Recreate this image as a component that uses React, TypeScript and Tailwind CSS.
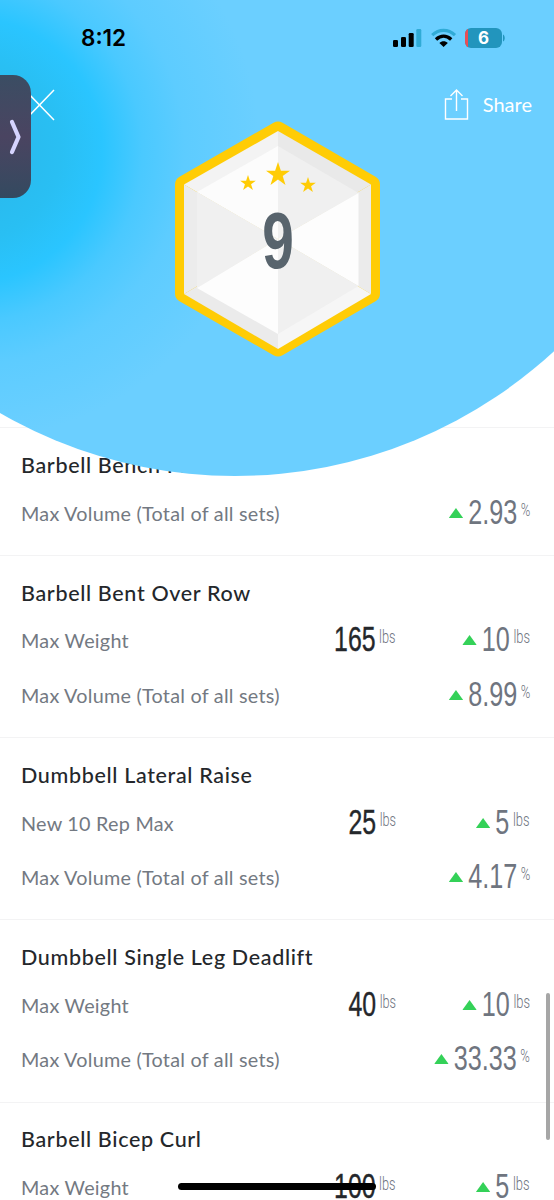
import React from 'react';

type Metric = { value: string; unit: string };

type Row = {
  label: string;
  total?: Metric;
  delta: Metric;
};

type Exercise = { name: string; rows: Row[] };

const exercises: Exercise[] = [
  {
    name: 'Barbell Bench Press',
    rows: [
      { label: 'Max Volume (Total of all sets)', delta: { value: '2.93', unit: '%' } },
    ],
  },
  {
    name: 'Barbell Bent Over Row',
    rows: [
      { label: 'Max Weight', total: { value: '165', unit: 'lbs' }, delta: { value: '10', unit: 'lbs' } },
      { label: 'Max Volume (Total of all sets)', delta: { value: '8.99', unit: '%' } },
    ],
  },
  {
    name: 'Dumbbell Lateral Raise',
    rows: [
      { label: 'New 10 Rep Max', total: { value: '25', unit: 'lbs' }, delta: { value: '5', unit: 'lbs' } },
      { label: 'Max Volume (Total of all sets)', delta: { value: '4.17', unit: '%' } },
    ],
  },
  {
    name: 'Dumbbell Single Leg Deadlift',
    rows: [
      { label: 'Max Weight', total: { value: '40', unit: 'lbs' }, delta: { value: '10', unit: 'lbs' } },
      { label: 'Max Volume (Total of all sets)', delta: { value: '33.33', unit: '%' } },
    ],
  },
  {
    name: 'Barbell Bicep Curl',
    rows: [
      { label: 'Max Weight', total: { value: '100', unit: 'lbs' }, delta: { value: '5', unit: 'lbs' } },
    ],
  },
];

function Unit({ children }: { children: string }) {
  return (
    <span className="ml-[5px] -mt-[4px] font-['Roboto'] text-[18px] leading-[20px] font-light text-[#6f757f]">
      {children}
    </span>
  );
}

// Digits are squeezed horizontally to get a condensed face
function Total({ value, unit }: Metric) {
  return (
    <div className="flex origin-right scale-x-[0.71] items-center pb-[4px]">
      <span className="font-['Liberation_Sans'] text-[35px] leading-[40px] text-[#24272b] [-webkit-text-stroke:0.4px_#24272b]">
        {value}
      </span>
      <Unit>{unit}</Unit>
    </div>
  );
}

function Delta({ value, unit }: Metric) {
  return (
    <div className="flex origin-right scale-x-[0.72] items-center pb-[4px]">
      <svg className="mt-[2px] mr-[7px] h-[10px] w-[20px]" viewBox="0 0 20 10" preserveAspectRatio="none">
        <path d="M10 0L20 10H0z" fill="#34d158" />
      </svg>
      <span className="font-['Liberation_Sans'] text-[35px] leading-[40px] text-[#6f757f]">{value}</span>
      <Unit>{unit}</Unit>
    </div>
  );
}

function Star({ className }: { className: string }) {
  return (
    <svg className={className} viewBox="0 0 24 23">
      <path d="M12 0l2.9 8.7H24l-7.3 5.4 2.8 8.9L12 17.6 4.5 23l2.8-8.9L0 8.700h9.100z" fill="#ffcc05" />
    </svg>
  );
}

function Badge() {
  return (
    <div className="relative h-[236px] w-[206px]">
      <svg className="absolute inset-0 h-full w-full" viewBox="0 0 206 236">
        <path
          d="M103 9.500L196 63.500V172.500L103 226.500L9 172.500V63.500Z"
          fill="#ffcc05"
          stroke="#ffcc05"
          strokeWidth="18"
          strokeLinejoin="round"
        />
        <path d="M103 10V118L9 63.500Z" fill="#f3f3f3" />
        <path d="M103 10L196 63.500L103 118Z" fill="#e9e9e9" />
        <path d="M9 63.500L103 118L9 173Z" fill="#ececec" />
        <path d="M196 63.500V173L103 118Z" fill="#ebebeb" />
        <path d="M9 173L103 118V228Z" fill="#ebebeb" />
        <path d="M196 173L103 228V118Z" fill="#f6f6f6" />
        <path d="M103 25V118L22 71Z" fill="#fcfcfc" />
        <path d="M103 25L183.500 72L103 118Z" fill="#f0f0f0" />
        <path d="M22 71L103 118L22 167Z" fill="#f0f0f0" />
        <path d="M183.500 72V165L103 118Z" fill="#fdfdfd" />
        <path d="M22 167L103 118V213Z" fill="#fdfdfd" />
        <path d="M183.500 165L103 213V118Z" fill="#f0f0f0" />
      </svg>
      <div className="relative flex flex-col items-center pt-[41px]">
        <div className="flex items-start gap-[10px]">
          <Star className="mt-[13px] h-[15px] w-[16px]" />
          <Star className="h-[23px] w-[24px]" />
          <Star className="mt-[15px] h-[15px] w-[16px]" />
        </div>
        <span className="mt-[9px] scale-x-[0.72] font-['Liberation_Sans'] text-[79px] leading-[80px] font-bold text-[#58646d]">9</span>
      </div>
    </div>
  );
}

function StatusIcons() {
  return (
    <svg className="h-[20px] w-[112px]" viewBox="0 0 112 20">
      <rect x="0" y="12" width="5" height="7" rx="1.300" fill="#000" />
      <rect x="8" y="9" width="5" height="10" rx="1.300" fill="#000" />
      <rect x="15.700" y="5" width="5" height="14" rx="1.300" fill="#000" />
      <rect x="23.300" y="1" width="5" height="18" rx="1.300" fill="#30abd6" />
      <path d="M39.200 7.200C46 .8 55.200 .8 62 7.200" fill="none" stroke="#30abd6" strokeWidth="3.200" />
      <path d="M43 11.400c4.700-4.300 10.600-4.300 15.200 0" fill="none" stroke="#000" strokeWidth="3.400" />
      <path d="M46.400 15c2.400-2.200 6-2.200 8.400 0L50.600 19z" fill="#000" />
      <clipPath id="battery">
        <rect x="72" y="0" width="37" height="20" rx="6" />
      </clipPath>
      <g clipPath="url(#battery)">
        <rect x="72" y="0" width="37" height="20" fill="#2295bd" />
        <rect x="72" y="0" width="3" height="20" fill="#ea4e56" />
      </g>
      <path d="M110 6.500c2.300 1 2.300 6 0 7z" fill="#2295bd" />
      <text x="90.500" y="16" textAnchor="middle" fontFamily="Inter" fontSize="17" fontWeight="700" fill="#fff">6</text>
    </svg>
  );
}

export default function App() {
  return (
    <div className="relative h-[1200px] w-[554px] overflow-hidden bg-white font-['Lato',sans-serif]">
      <main className="pt-[427px]">
        {exercises.map((exercise) => (
          <section key={exercise.name} className="border-t border-[#f3f3f4] pt-[15.750px] pb-[14px]">
            <h2 className="flex h-[42.500px] items-center pl-[21px] text-[21.500px] font-medium tracking-[0.660px] text-[#24272b]">
              {exercise.name}
            </h2>
            {exercise.rows.map(({ label, total, delta }) => (
              <div key={label} className="flex h-[54.500px] items-center pr-[24px] pl-[21px]">
                <span className="flex-1 whitespace-nowrap text-[19.800px] tracking-[0.250px] text-[#737982]">{label}</span>
                {total && <Total {...total} />}
                <div className="flex w-[134px] justify-end">
                  <Delta {...delta} />
                </div>
              </div>
            ))}
          </section>
        ))}
      </main>

      {/* Round hero overlapping the list */}
      <div className="absolute top-[-464px] left-[-235px] h-[940px] w-[940px] rounded-full bg-[#6bcfff] bg-[radial-gradient(circle_at_205px_614px,#29b6e8_0,#29bff3_90px,#2ac5ff_132px,#4ac9ff_172px,#5dccff_215px,#6bcfff_290px)]" />

      <header className="absolute inset-x-0 top-0">
        <div className="flex items-center justify-between pt-[25px] pr-[49px] pl-[81px]">
          <span className="font-['Inter'] text-[22.500px] leading-[25px] font-semibold text-black">8:12</span>
          <StatusIcons />
        </div>
        <div className="flex items-center justify-between pt-[38px] pr-[22px] pl-[29px]">
          <svg className="h-[32px] w-[27px]" viewBox="0 0 27 32" fill="none" stroke="#fff" strokeWidth="1.500">
            <path d="M-4 1L25 31M25 1L-4 31" />
          </svg>
          <div className="flex items-center gap-[14px] text-white">
            <svg className="h-[33px] w-[25px]" viewBox="0 0 25 33" fill="none" stroke="#fff" strokeWidth="1.400">
              <path d="M8 11H1.500V31H23.500V11H17M12.500 23V2M6.500 8L12.500 2L18.500 8" />
            </svg>
            <span className="pb-[1px] text-[20px]">Share</span>
          </div>
        </div>
      </header>

      <div className="absolute top-[121px] left-[175px]">
        <Badge />
      </div>

      <div className="absolute top-[75px] left-0 flex h-[123px] w-[31px] items-center justify-end rounded-r-[18px] bg-linear-to-b from-[#3a4d63] via-[#4a4461] to-[#334a60] pr-[9px]">
        <svg className="h-[36px] w-[13px]" viewBox="0 0 13 36" fill="none" stroke="#d6d4ff" strokeWidth="4.200" strokeLinecap="round" strokeLinejoin="round">
          <path d="M3 3L9.500 18L3 33" />
        </svg>
      </div>

      <div className="absolute top-[993px] left-[546px] h-[147px] w-[4px] rounded-full bg-[#a6a6a6]" />
      <div className="absolute top-[1183px] left-[178px] h-[7px] w-[198px] rounded-full bg-black" />
    </div>
  );
}
